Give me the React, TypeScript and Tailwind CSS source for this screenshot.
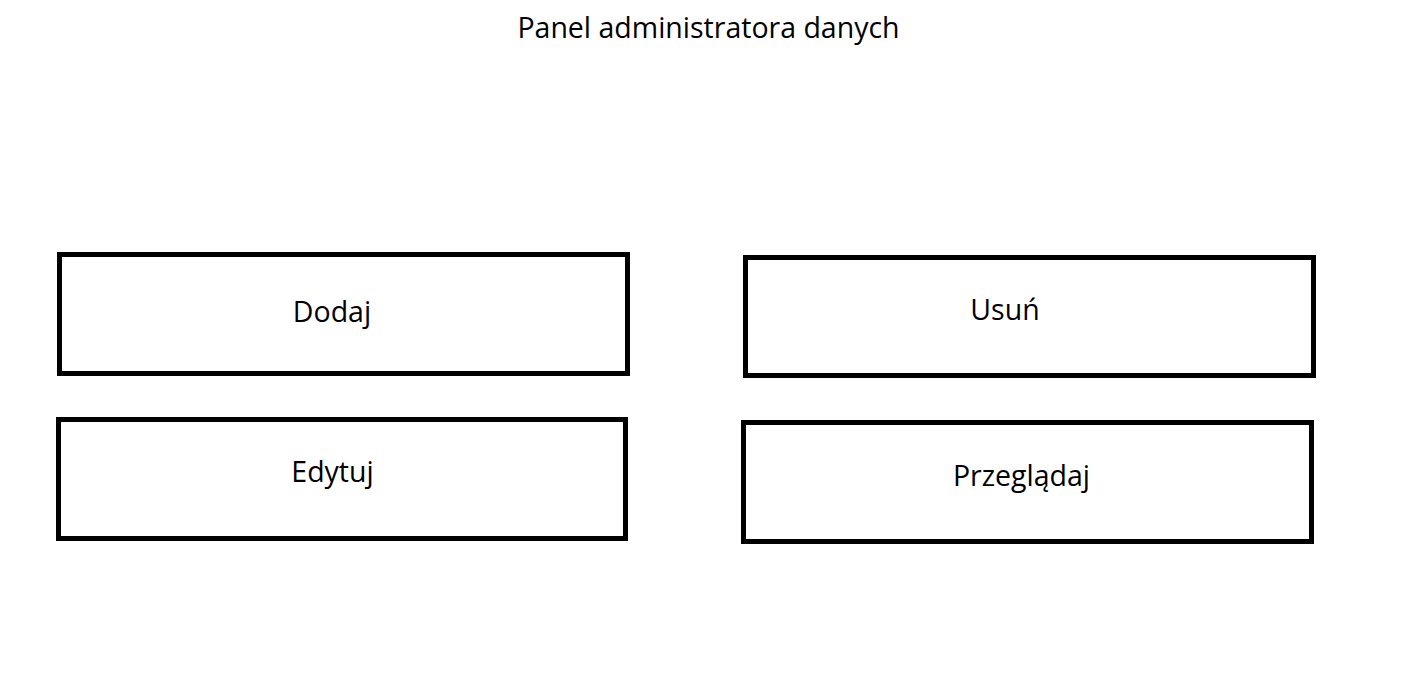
import React from 'react';

type TileProps = {
  label: string;
  className?: string;
};

function Tile({ label, className = '' }: TileProps) {
  return (
    <button
      type="button"
      className={`flex items-center justify-center border-[5px] border-black bg-white text-[28.5px] text-black ${className}`}
    >
      {label}
    </button>
  );
}

export default function App() {
  return (
    <div className="min-h-[683px] w-full bg-white text-black" style={{ fontFamily: '"Open Sans", "Noto Sans", sans-serif' }}>
      <h1 className="pt-[8px] pl-[5px] text-center text-[28.5px] leading-[38px] font-normal">Panel administratora danych</h1>

      <div className="mt-[206px] flex flex-col gap-[39px] pl-[57px]">
        <div className="flex items-start gap-[113px]">
          <Tile label="Dodaj" className="h-[124px] w-[573px] pr-[23px] pb-[6px]" />
          <Tile label="Usuń" className="mt-[3px] h-[123px] w-[573px] pr-[49px] pb-[14px]" />
        </div>
        <div className="flex items-start gap-[113px]">
          <Tile label="Edytuj" className="-ml-[1px] h-[124px] w-[572px] pr-[19px] pb-[16px]" />
          <Tile label="Przeglądaj" className="mt-[3px] h-[124px] w-[573px] pr-[12px] pb-[14px]" />
        </div>
      </div>
    </div>
  );
}
